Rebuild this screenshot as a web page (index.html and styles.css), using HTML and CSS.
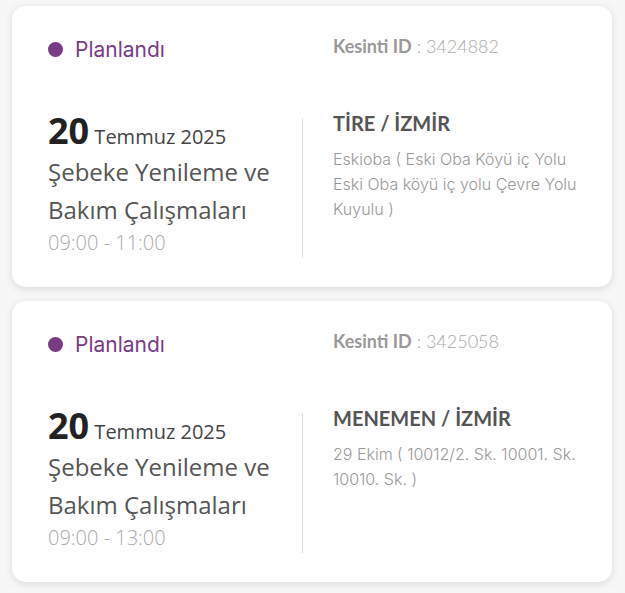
FILE: index.html
```html
<!DOCTYPE html>
<html lang="tr">
<head>
<meta charset="utf-8">
<link rel="stylesheet" href="styles.css">
</head>
<body>
<div class="list">
  <div class="card">
    <div class="status"><span class="dot"></span>Planlandı</div>
    <div class="cid"><b>Kesinti ID</b> : 3424882</div>
    <div class="when">
      <div class="date"><span class="day">20</span> Temmuz 2025</div>
      <div class="title">Şebeke Yenileme ve Bakım Çalışmaları</div>
      <div class="time">09:00 - 11:00</div>
    </div>
    <div class="where">
      <div class="place">TİRE / İZMİR</div>
      <div class="addr">Eskioba ( Eski Oba Köyü iç Yolu Eski Oba köyü iç yolu Çevre Yolu Kuyulu )</div>
    </div>
  </div>
  <div class="card">
    <div class="status"><span class="dot"></span>Planlandı</div>
    <div class="cid"><b>Kesinti ID</b> : 3425058</div>
    <div class="when">
      <div class="date"><span class="day">20</span> Temmuz 2025</div>
      <div class="title">Şebeke Yenileme ve Bakım Çalışmaları</div>
      <div class="time">09:00 - 13:00</div>
    </div>
    <div class="where">
      <div class="place">MENEMEN / İZMİR</div>
      <div class="addr">29 Ekim ( 10012/2. Sk. 10001. Sk. 10010. Sk. )</div>
    </div>
  </div>
</div>
</body>
</html>
```
FILE: styles.css
```css
* { box-sizing: border-box; }
html, body { margin: 0; padding: 0; }
body {
  background: #f7f7f7;
  font-family: "Open Sans", sans-serif;
  width: 625px;
  height: 593px;
  overflow: hidden;
}
.list {
  display: flex;
  flex-direction: column;
  gap: 14px;
  padding: 6px 13px 0 12px;
}
.card {
  background: #fff;
  border-radius: 14px;
  box-shadow: 0 2px 8px rgba(0,0,0,0.12);
  height: 281px;
  display: grid;
  grid-template-columns: 254px 1fr;
  grid-template-rows: 109px auto;
  padding: 0 20px 0 36px;
}
.status {
  display: flex;
  align-items: center;
  gap: 12px;
  padding-top: 29px;
  height: 58px;
  align-self: start;
  font-family: Inter, sans-serif;
  font-size: 21px;
  color: #7a3b86;
}
.dot {
  width: 15px;
  height: 15px;
  border-radius: 50%;
  background: #7a3b86;
}
.cid {
  padding-left: 31px;
  padding-top: 29px;
  font-family: Lato, sans-serif;
  font-size: 18px;
  color: #aaa;
  font-weight: 300;
}
.cid b { font-weight: 700; color: #999; }
.when {
  display: flex;
  flex-direction: column;
}
.date {
  color: #444;
  font-size: 20px;
  line-height: 36px;
  margin-top: -2px;
}
.day {
  font-size: 36px;
  font-weight: 700;
  color: #222;
}
.title {
  font-size: 24px;
  color: #555;
  line-height: 38px;
  margin-top: -2px;
}
.time {
  font-size: 20px;
  font-weight: 300;
  color: #aaa;
  line-height: 30px;
  margin-top: -1px;
}
.where {
  border-left: 1px solid #ddd;
  padding-left: 30px;
  height: 140px;
  margin-top: 3px;
}
.place {
  font-family: Lato, sans-serif;
  font-size: 20px;
  font-weight: 700;
  color: #555;
  line-height: 22px;
  margin-top: -6px;
}
.addr {
  font-family: Inter, sans-serif;
  font-size: 16px;
  font-weight: 300;
  color: #999;
  line-height: 25px;
  margin-top: 13px;
  max-width: 252px;
}
```
